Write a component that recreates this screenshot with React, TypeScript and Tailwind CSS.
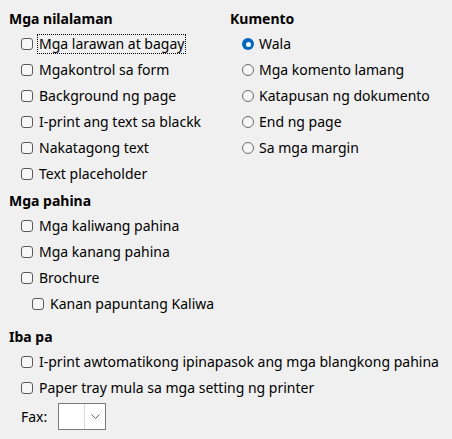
import { FC } from 'react';

const CheckBox: FC<{ label: string; indent?: boolean; focused?: boolean }> = ({ label, indent, focused }) => (
    <div className={`flex h-[26px] items-center ${indent ? 'pl-[24px]' : 'pl-[13px]'}`}>
        <span className="h-[12px] w-[12px] shrink-0 rounded-[3px] border border-[#5a5a5a] bg-[#f7f7f7]" />
        <span
            className={`ml-[4px] px-[1px] leading-[18px] ${
                focused ? 'border border-dotted border-black' : 'border border-transparent'
            }`}
        >
            {label}
        </span>
    </div>
);

const Radio: FC<{ label: string; checked?: boolean }> = ({ label, checked }) => (
    <div className="flex h-[26px] items-center pl-[13px]">
        {checked ? (
            <span className="flex h-[12px] w-[12px] shrink-0 items-center justify-center rounded-full bg-[#0067c0]">
                <span className="h-[5px] w-[5px] rounded-full bg-white" />
            </span>
        ) : (
            <span className="h-[12px] w-[12px] shrink-0 rounded-full border border-[#6b6b6b] bg-[#f7f7f7]" />
        )}
        <span className="ml-[5px] leading-[18px]">{label}</span>
    </div>
);

const Heading: FC<{ text: string }> = ({ text }) => (
    <div className="flex h-[26px] items-center pl-[1px] font-bold">{text}</div>
);

const App: FC = () => {
    return (
        <main
            className="h-[439px] w-[452px] overflow-hidden bg-[#f0f0f0] pt-[5px] pl-[8px] text-[14px] text-black"
            style={{ fontFamily: '"Noto Sans", sans-serif' }}
        >
            <div className="grid grid-cols-[220px_1fr]">
                <div>
                    <Heading text="Mga nilalaman" />
                    <CheckBox label="Mga larawan at bagay" focused />
                    <CheckBox label="Mgakontrol sa form" />
                    <CheckBox label="Background ng page" />
                    <CheckBox label="I-print ang text sa blackk" />
                    <CheckBox label="Nakatagong text" />
                    <CheckBox label="Text placeholder" />
                    <Heading text="Mga pahina" />
                    <CheckBox label="Mga kaliwang pahina" />
                    <CheckBox label="Mga kanang pahina" />
                    <CheckBox label="Brochure" />
                    <CheckBox label="Kanan papuntang Kaliwa" indent />
                </div>
                <div className="pl-[1px]">
                    <Heading text="Kumento" />
                    <Radio label="Wala" checked />
                    <Radio label="Mga komento lamang" />
                    <Radio label="Katapusan ng dokumento" />
                    <Radio label="End ng page" />
                    <Radio label="Sa mga margin" />
                </div>
            </div>
            <div className="mt-[6px]">
                <Heading text="Iba pa" />
                <CheckBox label="I-print awtomatikong ipinapasok ang mga blangkong pahina" />
                <CheckBox label="Paper tray mula sa mga setting ng printer" />
                <div className="mt-[2px] flex items-center pl-[13px]">
                    <span className="w-[37px]">Fax:</span>
                    <div className="flex h-[27px] w-[48px] border border-[#7a7a7a] bg-white">
                        <div className="flex-1" />
                        <div className="flex w-[21px] items-center justify-center border-l border-[#d9d9d9]">
                            <svg width="9" height="5" viewBox="0 0 9 5" fill="none">
                                <path d="M0.5 0.5 L4.5 4.5 L8.5 0.5" stroke="#606060" strokeWidth="1" />
                            </svg>
                        </div>
                    </div>
                </div>
            </div>
        </main>
    );
};

export default App;
